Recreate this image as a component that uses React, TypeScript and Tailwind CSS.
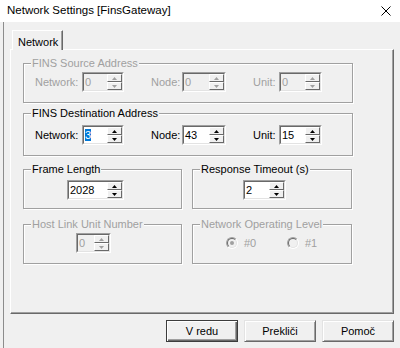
import React from 'react'

function Arrow({ up, disabled }: { up?: boolean; disabled?: boolean }) {
  const fill = disabled ? '#a0a0a0' : '#000'
  return (
    <svg width="5" height="3" viewBox="0 0 5 3" className="block">
      {up ? <polygon points="2.5,0 5,3 0,3" fill={fill} /> : <polygon points="0,0 5,0 2.5,3" fill={fill} />}
    </svg>
  )
}

function SpinBtn({ up, disabled }: { up?: boolean; disabled?: boolean }) {
  return (
    <div className="flex flex-1 items-center justify-center border border-t-white border-l-white border-r-[#696969] border-b-[#696969] bg-[#f0f0f0]">
      <Arrow up={up} disabled={disabled} />
    </div>
  )
}

interface SpinProps {
  value: string
  w: string
  disabled?: boolean
  selected?: boolean
}

function Spin({ value, w, disabled, selected }: SpinProps) {
  return (
    <div className={`flex h-[20px] shrink-0 border border-t-[#a0a0a0] border-l-[#a0a0a0] border-r-white border-b-white ${w}`}>
      <div
        className={`flex flex-1 min-w-0 border border-t-[#696969] border-l-[#696969] border-r-[#e3e3e3] border-b-[#e3e3e3] ${
          disabled ? 'bg-[#f0f0f0] text-[#a0a0a0]' : 'bg-white text-black'
        }`}
      >
        <div className="flex-1 pl-[1px] leading-[16px]">
          {selected ? <span className="bg-[#0078d7] text-white">{value}</span> : value}
        </div>
        <div className="flex w-[15px] flex-col">
          <SpinBtn up disabled={disabled} />
          <SpinBtn disabled={disabled} />
        </div>
      </div>
    </div>
  )
}

function Group({
  title,
  disabled,
  className,
  children,
}: {
  title: string
  disabled?: boolean
  className: string
  children: React.ReactNode
}) {
  return (
    <fieldset
      className={`m-0 min-w-0 border border-[#a0a0a0] p-0 shadow-[inset_1px_1px_0_#fff,1px_1px_0_#fff] ${className}`}
    >
      <legend className={`ml-[7px] bg-[#f0f0f0] px-[1px] leading-[14px] ${disabled ? 'text-[#a0a0a0]' : 'text-black'}`}>
        {title}
      </legend>
      {children}
    </fieldset>
  )
}

function AddressRow({ disabled, values, selectFirst }: { disabled?: boolean; values: string[]; selectFirst?: boolean }) {
  const label = disabled ? 'text-[#a0a0a0]' : 'text-black'
  return (
    <div className="flex items-center pl-[11px]">
      <span className={`w-[47px] ${label}`}>Network:</span>
      <Spin value={values[0]} w="w-[42px]" disabled={disabled} selected={selectFirst} />
      <span className={`ml-[27px] w-[31px] ${label}`}>Node:</span>
      <Spin value={values[1]} w="w-[44px]" disabled={disabled} />
      <span className={`ml-[27px] w-[26px] ${label}`}>Unit:</span>
      <Spin value={values[2]} w="w-[43px]" disabled={disabled} />
    </div>
  )
}

function Radio({ checked, label }: { checked?: boolean; label: string }) {
  return (
    <div className="flex w-[61px] items-center">
      <div className="flex h-[12px] w-[12px] items-center justify-center rounded-full border border-t-[#a0a0a0] border-l-[#a0a0a0] border-r-white border-b-white">
        <div className="flex h-[10px] w-[10px] items-center justify-center rounded-full border border-t-[#696969] border-l-[#696969] border-r-[#e3e3e3] border-b-[#e3e3e3] bg-[#f0f0f0]">
          {checked && <div className="h-[4px] w-[4px] rounded-full bg-[#a0a0a0]" />}
        </div>
      </div>
      <span className="ml-[6px] text-[#a0a0a0]">{label}</span>
    </div>
  )
}

function Button({ label, isDefault }: { label: string; isDefault?: boolean }) {
  return (
    <div
      className={`flex h-[22px] w-[72px] items-center justify-center bg-[#f0f0f0] text-black ${
        isDefault
          ? 'border border-[#3c3c3c] shadow-[inset_1px_1px_0_#fff,inset_-1px_-1px_0_#696969,inset_-2px_-2px_0_#a0a0a0]'
          : 'border border-t-[#e3e3e3] border-l-[#e3e3e3] border-r-[#696969] border-b-[#696969] shadow-[inset_1px_1px_0_#fff,inset_-1px_-1px_0_#a0a0a0]'
      }`}
    >
      {label}
    </div>
  )
}

export default function App() {
  return (
    <div className="flex h-[348px] w-[400px] flex-col overflow-hidden bg-[#f0f0f0] font-['Liberation_Sans',Arial,sans-serif] text-[11px] text-black">
      {/* title bar */}
      <div className="flex h-[22px] shrink-0 items-center justify-between bg-white pl-[7px] pr-[9px]">
        <span className="text-[11.5px]">Network Settings [FinsGateway]</span>
        <svg width="10" height="10" viewBox="0 0 10 10">
          <path d="M0.5 0.5 L9.5 9.5 M9.5 0.5 L0.5 9.5" stroke="#000" strokeWidth="1" />
        </svg>
      </div>

      <div className="ml-[3px] flex flex-1 border-l border-[#8c8c8c]">
        <div className="flex flex-col pl-[6px] pt-[8px]">
          {/* tab */}
          <div className="relative z-10 -mb-[1px] ml-[2px] flex h-[20px] w-[51px] items-start border border-b-0 border-t-white border-l-white border-r-[#696969] bg-[#f0f0f0] pl-[5px] pt-[3px] shadow-[inset_-1px_0_0_#a0a0a0]">
            Network
          </div>

          {/* tab page */}
          <div className="flex h-[265px] w-[384px] flex-col border border-t-white border-l-white border-r-[#696969] border-b-[#696969] pl-[12px] pt-[6px] shadow-[inset_-1px_-1px_0_#a0a0a0]">
            <Group title="FINS Source Address" disabled className="w-[330px]">
              <div className="pb-[10px] pt-[2px]">
                <AddressRow disabled values={['0', '0', '0']} />
              </div>
            </Group>

            <Group title="FINS Destination Address" className="mt-[3px] w-[330px]">
              <div className="pb-[10px] pt-[5px]">
                <AddressRow values={['3', '43', '15']} selectFirst />
              </div>
            </Group>

            <div className="mt-[6px] flex gap-[10px]">
              <Group title="Frame Length" className="w-[159px]">
                <div className="pb-[8px] pl-[43px] pt-[4px]">
                  <Spin value="2028" w="w-[57px]" />
                </div>
              </Group>
              <Group title="Response Timeout (s)" className="w-[160px]">
                <div className="pb-[8px] pl-[50px] pt-[4px]">
                  <Spin value="2" w="w-[43px]" />
                </div>
              </Group>
            </div>

            <div className="mt-[8px] flex gap-[10px]">
              <Group title="Host Link Unit Number" disabled className="w-[159px]">
                <div className="pb-[10px] pl-[52px] pt-[2px]">
                  <Spin value="0" w="w-[35px]" disabled />
                </div>
              </Group>
              <Group title="Network Operating Level" disabled className="w-[160px]">
                <div className="flex h-[32px] items-center pb-[10px] pl-[33px] pt-[2px]">
                  <Radio checked label="#0" />
                  <Radio label="#1" />
                </div>
              </Group>
            </div>
          </div>

          {/* dialog buttons */}
          <div className="ml-[156px] mt-[6px] flex gap-[6px]">
            <Button label="V redu" isDefault />
            <Button label="Prekliči" />
            <Button label="Pomoč" />
          </div>
        </div>
      </div>
    </div>
  )
}
